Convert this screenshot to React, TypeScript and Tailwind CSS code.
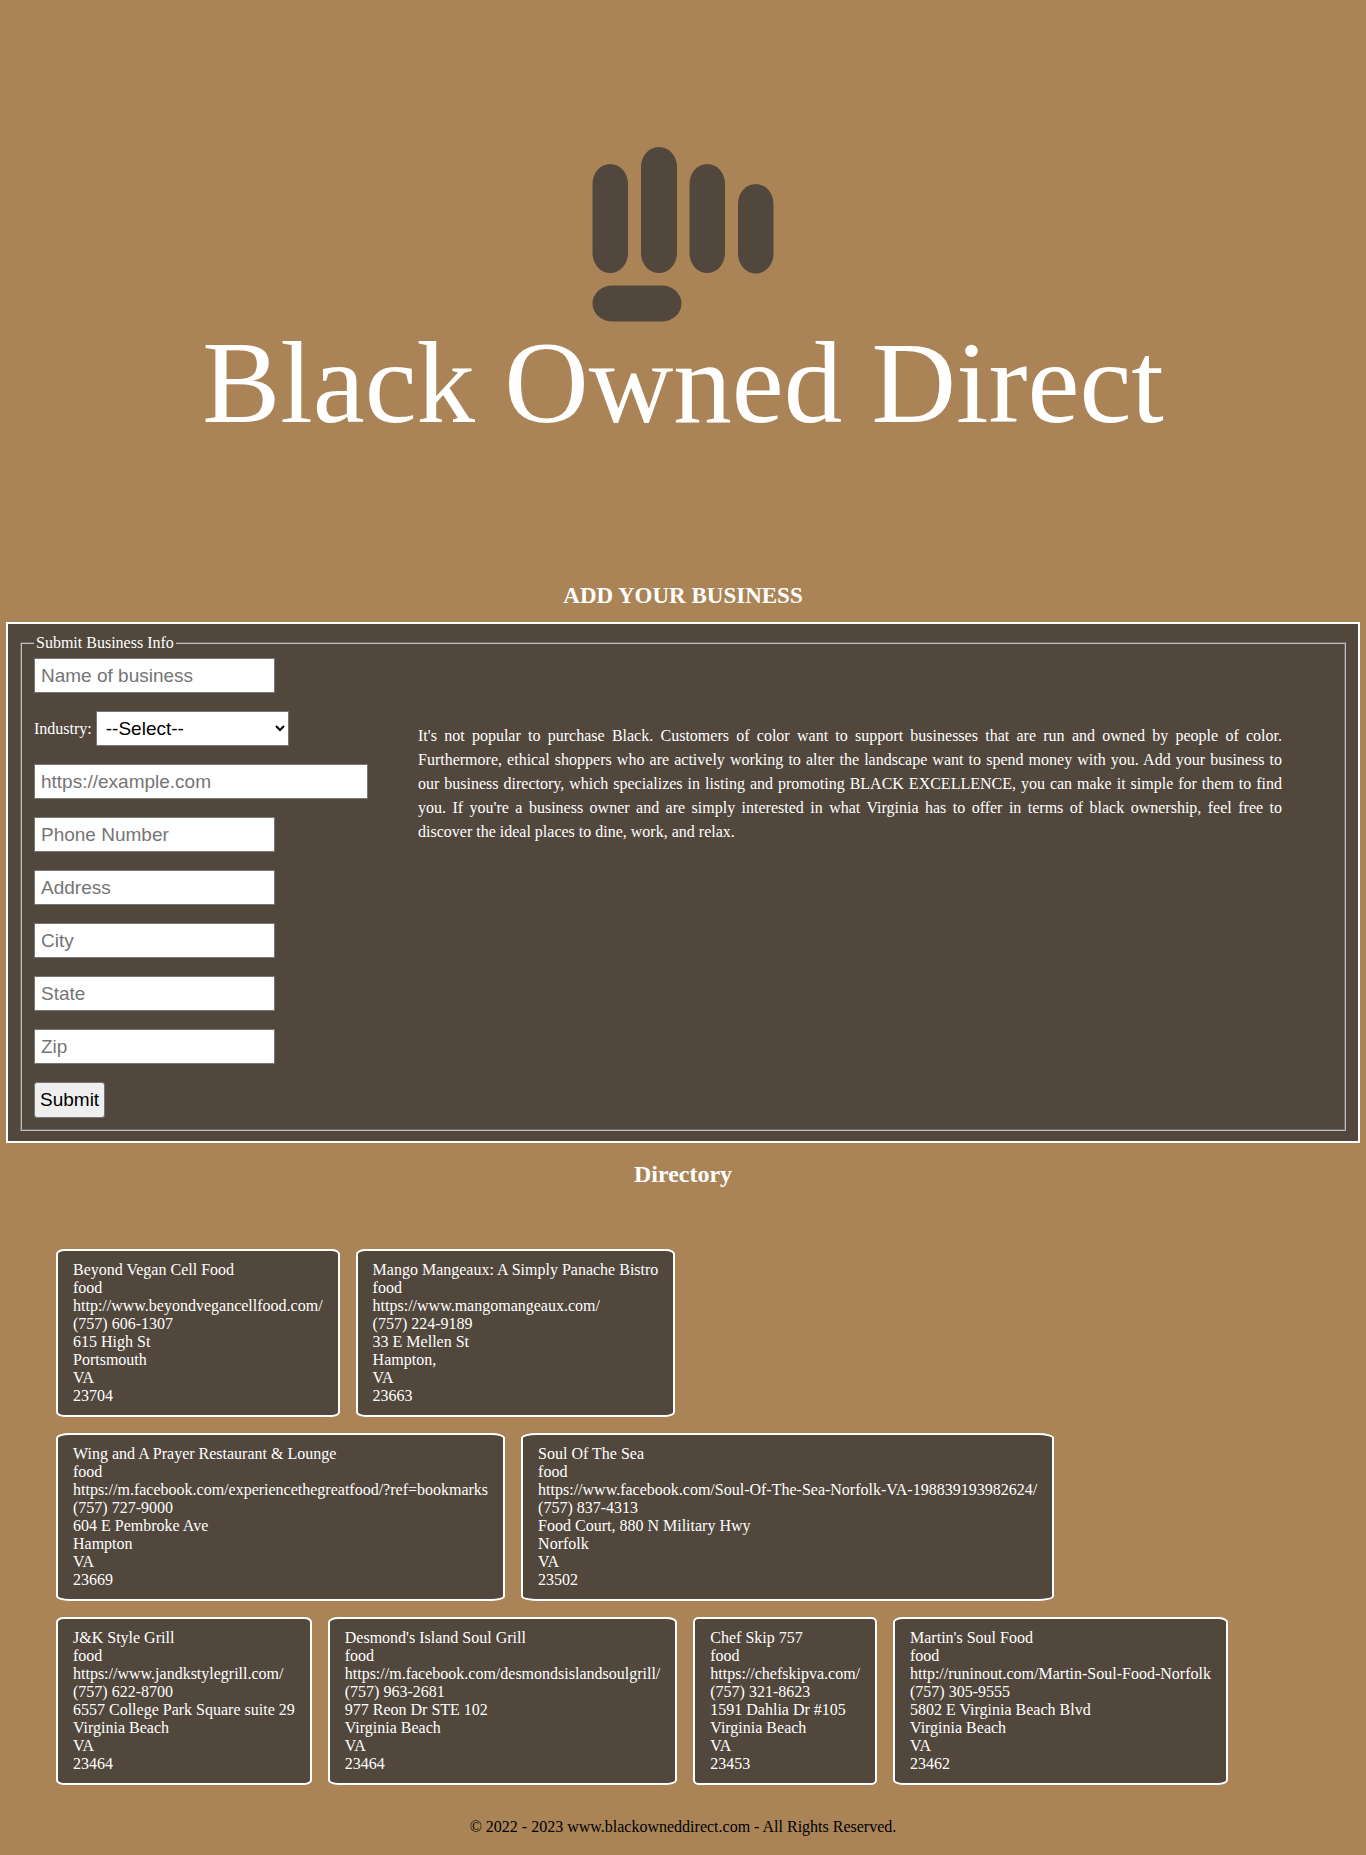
import React from "react";

type Business = {
  name: string;
  industry: string;
  url: string;
  phone: string;
  address: string;
  city: string;
  state: string;
  zip: string;
};

const rows: Business[][] = [
  [
    { name: "Beyond Vegan Cell Food", industry: "food", url: "http://www.beyondvegancellfood.com/", phone: "(757) 606-1307", address: "615 High St", city: "Portsmouth", state: "VA", zip: "23704" },
    { name: "Mango Mangeaux: A Simply Panache Bistro", industry: "food", url: "https://www.mangomangeaux.com/", phone: "(757) 224-9189", address: "33 E Mellen St", city: "Hampton,", state: "VA", zip: "23663" },
  ],
  [
    { name: "Wing and A Prayer Restaurant & Lounge", industry: "food", url: "https://m.facebook.com/experiencethegreatfood/?ref=bookmarks", phone: "(757) 727-9000", address: "604 E Pembroke Ave", city: "Hampton", state: "VA", zip: "23669" },
    { name: "Soul Of The Sea", industry: "food", url: "https://www.facebook.com/Soul-Of-The-Sea-Norfolk-VA-198839193982624/", phone: "(757) 837-4313", address: "Food Court, 880 N Military Hwy", city: "Norfolk", state: "VA", zip: "23502" },
  ],
  [
    { name: "J&K Style Grill", industry: "food", url: "https://www.jandkstylegrill.com/", phone: "(757) 622-8700", address: "6557 College Park Square suite 29", city: "Virginia Beach", state: "VA", zip: "23464" },
    { name: "Desmond's Island Soul Grill", industry: "food", url: "https://m.facebook.com/desmondsislandsoulgrill/", phone: "(757) 963-2681", address: "977 Reon Dr STE 102", city: "Virginia Beach", state: "VA", zip: "23464" },
    { name: "Chef Skip 757", industry: "food", url: "https://chefskipva.com/", phone: "(757) 321-8623", address: "1591 Dahlia Dr #105", city: "Virginia Beach", state: "VA", zip: "23453" },
    { name: "Martin's Soul Food", industry: "food", url: "http://runinout.com/Martin-Soul-Food-Norfolk", phone: "(757) 305-9555", address: "5802 E Virginia Beach Blvd", city: "Virginia Beach", state: "VA", zip: "23462" },
  ],
];

const control =
  "h-[35px] border border-[#767676] bg-white font-['Liberation_Sans',Arial,sans-serif] text-[19px] text-black placeholder:text-[#757575]";

function Field({ label, type = "text", wide = false }: { label: string; type?: string; wide?: boolean }) {
  return (
    <input
      type={type}
      aria-label={label === "https://example.com" ? "Website" : label}
      placeholder={label}
      className={`${control} px-1.5 ${wide ? "w-[334px]" : "w-[241px]"}`}
    />
  );
}

function Fist() {
  return (
    <svg width="182" height="175" viewBox="0 0 182 175" fill="#51473c" aria-hidden="true">
      <rect x="0.5" y="17" width="35.5" height="109" rx="18" ry="20" />
      <rect x="49" y="0" width="36" height="126" rx="18" ry="20" />
      <rect x="97.5" y="17" width="35.5" height="109" rx="18" ry="20" />
      <rect x="146" y="37" width="35.5" height="89.5" rx="18" ry="20" />
      <rect x="0.5" y="138.5" width="89" height="36" rx="20" ry="18" />
    </svg>
  );
}

function Card({ b }: { b: Business }) {
  return (
    <li className="rounded-[3%] border-2 border-white bg-[#51473c] px-[15px] py-2.5">
      <p>{b.name}</p>
      <p>{b.industry}</p>
      <p>{b.url}</p>
      <p>{b.phone}</p>
      <p>{b.address}</p>
      <p>{b.city}</p>
      <p>{b.state}</p>
      <p>{b.zip}</p>
    </li>
  );
}

export default function App() {
  return (
    <div className="min-h-screen bg-[#aa8456] px-1.5 font-['Liberation_Serif','Times_New_Roman',serif] text-base leading-[18px] text-white">
      <header className="flex flex-col items-center pt-[147px]">
        <Fist />
        <h1 className="mt-0.5 text-center text-[117px] leading-[117px]">Black Owned Direct</h1>
      </header>

      <main>
        <h2 className="mt-[141px] mb-3 text-center text-[23px] leading-7 font-bold">ADD YOUR BUSINESS</h2>
        <form
          className="border-2 border-white bg-[#51473c] px-3 py-2.5"
          onSubmit={(e: React.FormEvent) => e.preventDefault()}
        >
          <fieldset className="border-2 border-[#c0c0c0] px-3 pt-1.5 pb-[11px] [border-style:groove]">
            <legend className="px-0.5">Submit Business Info</legend>
            <div className="flex items-start">
              <div className="flex shrink-0 flex-col items-start gap-[18px]">
                <Field label="Name of business" />
                <div className="flex items-center gap-1">
                  <label htmlFor="industry">Industry:</label>
                  <select id="industry" className={`${control} w-[193px] px-[5px]`}>
                    <option>--Select--</option>
                    <option>food</option>
                  </select>
                </div>
                <Field label="https://example.com" type="url" wide />
                <Field label="Phone Number" type="tel" />
                <Field label="Address" />
                <Field label="City" />
                <Field label="State" />
                <Field label="Zip" />
                <button
                  type="submit"
                  className="h-9 rounded-[3px] border border-[#767676] bg-[#efefef] px-[5px] font-['Liberation_Sans',Arial,sans-serif] text-[19px] text-black"
                >
                  Submit
                </button>
              </div>
              <p className="mx-[50px] mt-[66px] flex-1 text-justify leading-6">
                It's not popular to purchase Black. Customers of color want to support businesses that are run and
                owned by people of color. Furthermore, ethical shoppers who are actively working to alter the landscape
                want to spend money with you. Add your business to our business directory, which specializes in listing
                and promoting BLACK EXCELLENCE, you can make it simple for them to find you. If you're a business owner
                and are simply interested in what Virginia has to offer in terms of black ownership, feel free to
                discover the ideal places to dine, work, and relax.
              </p>
            </div>
          </fieldset>
        </form>

        <h2 className="mt-[17px] text-center text-2xl leading-7 font-bold">Directory</h2>
        <div className="mt-[61px] flex flex-col gap-4 px-[50px]">
          {rows.map((row, i) => (
            <ul key={i} className="flex flex-wrap gap-4">
              {row.map((b) => (
                <Card key={b.name} b={b} />
              ))}
            </ul>
          ))}
        </div>
      </main>

      <footer className="pt-[33px] pb-[18px] text-center text-black">
        © 2022 - 2023 www.blackowneddirect.com - All Rights Reserved.
      </footer>
    </div>
  );
}
